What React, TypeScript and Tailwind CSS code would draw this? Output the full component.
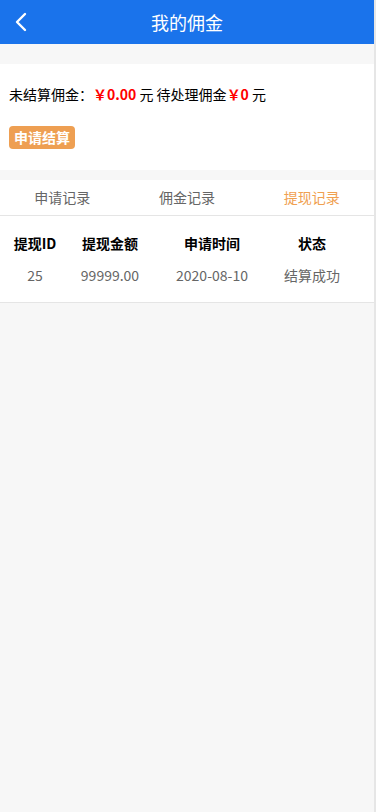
import React from "react";

export default function App() {
  const font = { fontFamily: '"Noto Sans CJK SC", "Noto Sans", sans-serif' };
  return (
    <div className="min-h-[812px] w-[376px] bg-[#f7f7f7] flex" style={font}>
      <div className="w-[374px] flex flex-col">
        <div className="h-[44px] bg-[#1a73eb] flex items-center relative">
          <svg className="absolute left-[14px] top-[12px]" width="14" height="20" viewBox="0 0 14 20" fill="none">
            <path d="M11 2 L3 10 L11 18" stroke="white" strokeWidth="2.4" strokeLinecap="round" strokeLinejoin="round" />
          </svg>
          <div className="flex-1 text-center text-white text-[18px]">我的佣金</div>
        </div>
        <div className="h-[20px]" />
        <div className="bg-white h-[106px] px-[9px] pt-[20px]">
          <div className="text-[14px] text-black leading-[20px] whitespace-nowrap">
            未结算佣金：
            <span className="text-[#ff0000] font-bold">￥0.00</span> 元 待处理佣金
            <span className="text-[#ff0000] font-bold">￥0</span> 元
          </div>
          <div className="mt-[20px]">
            <span className="inline-block bg-[#ee9f52] text-white font-bold text-[14px] leading-[23px] px-[5px] rounded-[4px]">
              申请结算
            </span>
          </div>
        </div>
        <div className="h-[10px]" />
        <div className="bg-white h-[36px] grid grid-cols-3 border-b border-[#e5e5e5] text-[14px]">
          <div className="flex items-center justify-center text-[#666]">申请记录</div>
          <div className="flex items-center justify-center text-[#666]">佣金记录</div>
          <div className="flex items-center justify-center text-[#f0a050]">提现记录</div>
        </div>
        <div className="bg-white h-[87px] border-b border-[#e5e5e5] pt-[17px] text-[14px]">
          <div className="grid grid-cols-[70px_80px_124px_76px] leading-[20px]">
            <div className="text-center font-bold text-black">提现ID</div>
            <div className="text-center font-bold text-black">提现金额</div>
            <div className="text-center font-bold text-black">申请时间</div>
            <div className="text-center font-bold text-black">状态</div>
          </div>
          <div className="grid grid-cols-[70px_80px_124px_76px] leading-[20px] mt-[12px] text-[#666]">
            <div className="text-center">25</div>
            <div className="text-center">99999.00</div>
            <div className="text-center">2020-08-10</div>
            <div className="text-center">结算成功</div>
          </div>
        </div>
      </div>
      <div className="w-[2px] bg-[#e6e6e6]" />
    </div>
  );
}
